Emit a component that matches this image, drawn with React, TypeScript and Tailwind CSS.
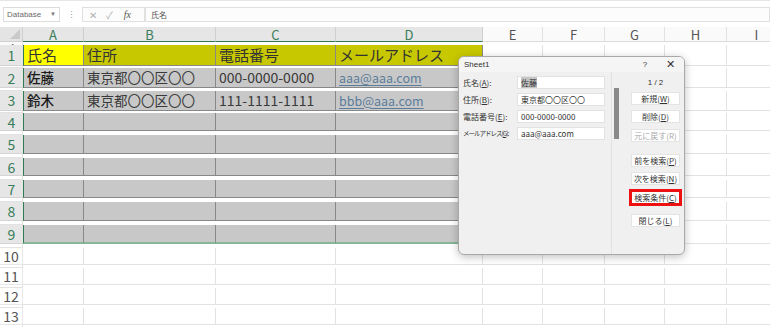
import React from "react";

const font = "font-['Noto_Sans_CJK_JP','Noto_Sans',sans-serif]";
const grid = "grid grid-cols-[23px_61px_132px_120px_147px_60px_62px_60px_62px_60px]";
const colLetters = ["A", "B", "C", "D", "E", "F", "G", "H", "I", "J"];

const rows = [
  { n: 1, h: "h-[23px]", cells: ["氏名", "住所", "電話番号", "メールアドレス"] },
  { n: 2, h: "h-[23px]", cells: ["佐藤", "東京都〇〇区〇〇", "000-0000-0000", "aaa@aaa.com"] },
  { n: 3, h: "h-[22px]", cells: ["鈴木", "東京都〇〇区〇〇", "111-1111-1111", "bbb@aaa.com"] },
  { n: 4, h: "h-[22px]", cells: [] },
  { n: 5, h: "h-[23px]", cells: [] },
  { n: 6, h: "h-[22px]", cells: [] },
  { n: 7, h: "h-[22px]", cells: [] },
  { n: 8, h: "h-[23px]", cells: [] },
  { n: 9, h: "h-[23px]", cells: [] },
  { n: 10, h: "h-[20px]", cells: [] },
  { n: 11, h: "h-[20px]", cells: [] },
  { n: 12, h: "h-[20px]", cells: [] },
  { n: 13, h: "h-[20px]", cells: [] },
];

function Cell({ row, col, text }: { row: number; col: number; text?: string }) {
  const sel = row <= 9 && col < 4;
  let bg = "bg-white";
  if (sel) bg = row === 1 ? (col === 0 ? "bg-[#ffff00]" : "bg-[#c8c800]") : "bg-[#c8c8c8]";
  const line = sel ? "border-[#888888]" : "border-[#e2e2e2]";
  const bottom = row === 9 && col < 4 ? "border-b-2 border-b-[#86b797]" : "border-b";
  const first = col === 0 && row <= 9 ? "border-l border-l-[#2f7a52]" : "";
  let txt = "text-[15px] text-[#333333]";
  if (row > 1) txt = "text-[13.5px] text-[#3a3a3a]";
  if (row > 1 && col === 0) txt = "text-[13.5px] font-medium text-[#1a1a1a]";
  if (row > 1 && col === 2) txt = "text-[14px] text-[#3a3a3a]";
  if (row > 1 && col === 3) txt = "text-[12.5px] text-[#5b7d9c] underline underline-offset-2";
  return (
    <div className={`${bg} ${line} border-r ${bottom} ${first} ${txt} pl-[3px] flex items-center whitespace-nowrap leading-[1.25] min-w-0`}>
      {text}
    </div>
  );
}

function Btn({ label, k, mt, disabled, hl }: { label: string; k: string; mt: string; disabled?: boolean; hl?: boolean }) {
  return (
    <div
      className={`${mt} h-[13px] w-[49px] bg-white border border-[#e4e4e4] flex items-center justify-center text-[8px] leading-none ${disabled ? "text-[#a8a8a8]" : "text-[#333333]"} ${hl ? "outline-[3px] outline outline-[#ee1111] outline-offset-[-1px]" : ""}`}
    >
      {label}(<span className={disabled ? "" : "underline"}>{k}</span>)
    </div>
  );
}

export default function App() {
  const fields = [
    { l: "氏名", k: "A", v: "佐藤", sel: true, cls: "text-[8px]" },
    { l: "住所", k: "B", v: "東京都〇〇区〇〇", cls: "text-[8px]" },
    { l: "電話番号", k: "E", v: "000-0000-0000", cls: "text-[8px]" },
    { l: "メールアドレス", k: "G", v: "aaa@aaa.com", cls: "text-[6.5px] tracking-[-1px]" },
  ];
  return (
    <div className={`relative w-[770px] h-[327px] overflow-hidden bg-white ${font}`}>
      {/* formula bar */}
      <div className="h-[27px] flex items-center pt-[1px] border-t border-[#e6e6e6]">
        <div className="ml-[3px] w-[57px] h-[15px] border border-[#dcdcdc] bg-white flex items-center justify-between px-[3px] text-[8px] text-[#6a6a6a] font-['Liberation_Sans',sans-serif]">
          <span>Database</span>
          <span className="text-[6px] text-[#777777]">▼</span>
        </div>
        <span className="ml-[7px] text-[9px] text-[#9a9a9a]">⋮</span>
        <div className="ml-[6px] w-[63px] h-[15px] border border-[#e0e0e0] bg-[#fcfcfc] flex items-center text-[#b0b0b0]">
          <span className="ml-[6px] text-[10px]">✕</span>
          <span className="ml-[9px] text-[10px]">✓</span>
          <span className="ml-[11px] text-[10px] italic font-['Liberation_Serif',serif] text-[#555555]">fx</span>
        </div>
        <div className="flex-1 h-[15px] border border-[#e0e0e0] bg-[#fcfcfc] flex items-center pl-[5px] text-[8px] text-[#555555]">
          氏名
        </div>
      </div>

      {/* column headers */}
      <div className={`${grid} h-[18px]`}>
        <div className="bg-[#e4e4e4] border-r border-b border-[#d0d0d0] flex items-end justify-end p-[2px]">
          <svg width="10" height="10" viewBox="0 0 10 10">
            <polygon points="10,0 10,10 0,10" fill="#c9c9c9" />
          </svg>
        </div>
        {colLetters.map((c, i) => (
          <div
            key={c}
            className={`flex items-center justify-center text-[13px] leading-none border-r ${
              i < 4
                ? "bg-[#e6e6e6] text-[#3a7d5a] border-[#cfcfcf] border-b border-b-[#2f7a52]"
                : "bg-[#fafafa] text-[#555555] border-[#e2e2e2] border-b border-b-[#dcdcdc]"
            }`}
          >
            {c}
          </div>
        ))}
      </div>

      {/* rows */}
      {rows.map((r) => (
        <div key={r.n} className={`${grid} ${r.h}`}>
          <div
            className={`flex items-center justify-center text-[14px] leading-none border-b ${
              r.n <= 9 ? "bg-[#e6e6e6] text-[#3a7d5a] border-[#d4d4d4]" : "bg-white text-[#555555] border-[#e8e8e8] border-r"
            }`}
          >
            {r.n}
          </div>
          {colLetters.map((c, i) => (
            <Cell key={c} row={r.n} col={i} text={r.cells[i]} />
          ))}
        </div>
      ))}

      {/* data form dialog */}
      <div className="absolute left-[458px] top-[56px] w-[227px] h-[199px] rounded-[6px] border border-[#a9a9a9] bg-[#f0f0f0] shadow-[0_2px_8px_rgba(0,0,0,0.25)] flex flex-col overflow-hidden">
        <div className="h-[15px] bg-[#f5f5f5] flex items-center pl-[5px] text-[8px] text-[#333333] font-['Liberation_Sans',sans-serif]">
          <span className="flex-1">Sheet1</span>
          <span className="w-[10px] text-center">?</span>
          <span className="ml-[16px] mr-[9px] text-[11px] leading-none">✕</span>
        </div>
        <div className="flex flex-1">
          <div className="w-[152px] pl-[4px] pt-[4px] flex flex-col gap-[4px]">
            {fields.map((f) => (
              <div key={f.k} className="h-[13px] flex items-center">
                <div className={`w-[54px] shrink-0 text-[#333333] whitespace-nowrap ${f.cls}`}>
                  {f.l}(<span className="underline">{f.k}</span>):
                </div>
                <div className="w-[88px] h-[13px] bg-white border border-[#e2e2e2] flex items-center pl-[3px] text-[8px] text-[#333333] whitespace-nowrap overflow-hidden">
                  <span className={f.sel ? "bg-[#c4c4c4]" : ""}>{f.v}</span>
                </div>
              </div>
            ))}
          </div>
          <div className="w-[20px] border-l border-[#e2e2e2] pl-[2px] pt-[16px]">
            <div className="w-[5px] h-[51px] bg-[#8a8a8a]" />
          </div>
          <div className="w-[49px] pt-[5px] flex flex-col">
            <div className="h-[11px] flex items-center justify-center text-[8px] text-[#333333] font-['Liberation_Sans',sans-serif]">
              1 / 2
            </div>
            <Btn label="新規" k="W" mt="mt-[4px]" />
            <Btn label="削除" k="D" mt="mt-[5px]" />
            <Btn label="元に戻す" k="R" mt="mt-[6px]" disabled />
            <Btn label="前を検索" k="P" mt="mt-[12px]" />
            <Btn label="次を検索" k="N" mt="mt-[5px]" />
            <Btn label="検索条件" k="C" mt="mt-[6px]" hl />
            <Btn label="閉じる" k="L" mt="mt-[10px]" />
          </div>
        </div>
      </div>
    </div>
  );
}
